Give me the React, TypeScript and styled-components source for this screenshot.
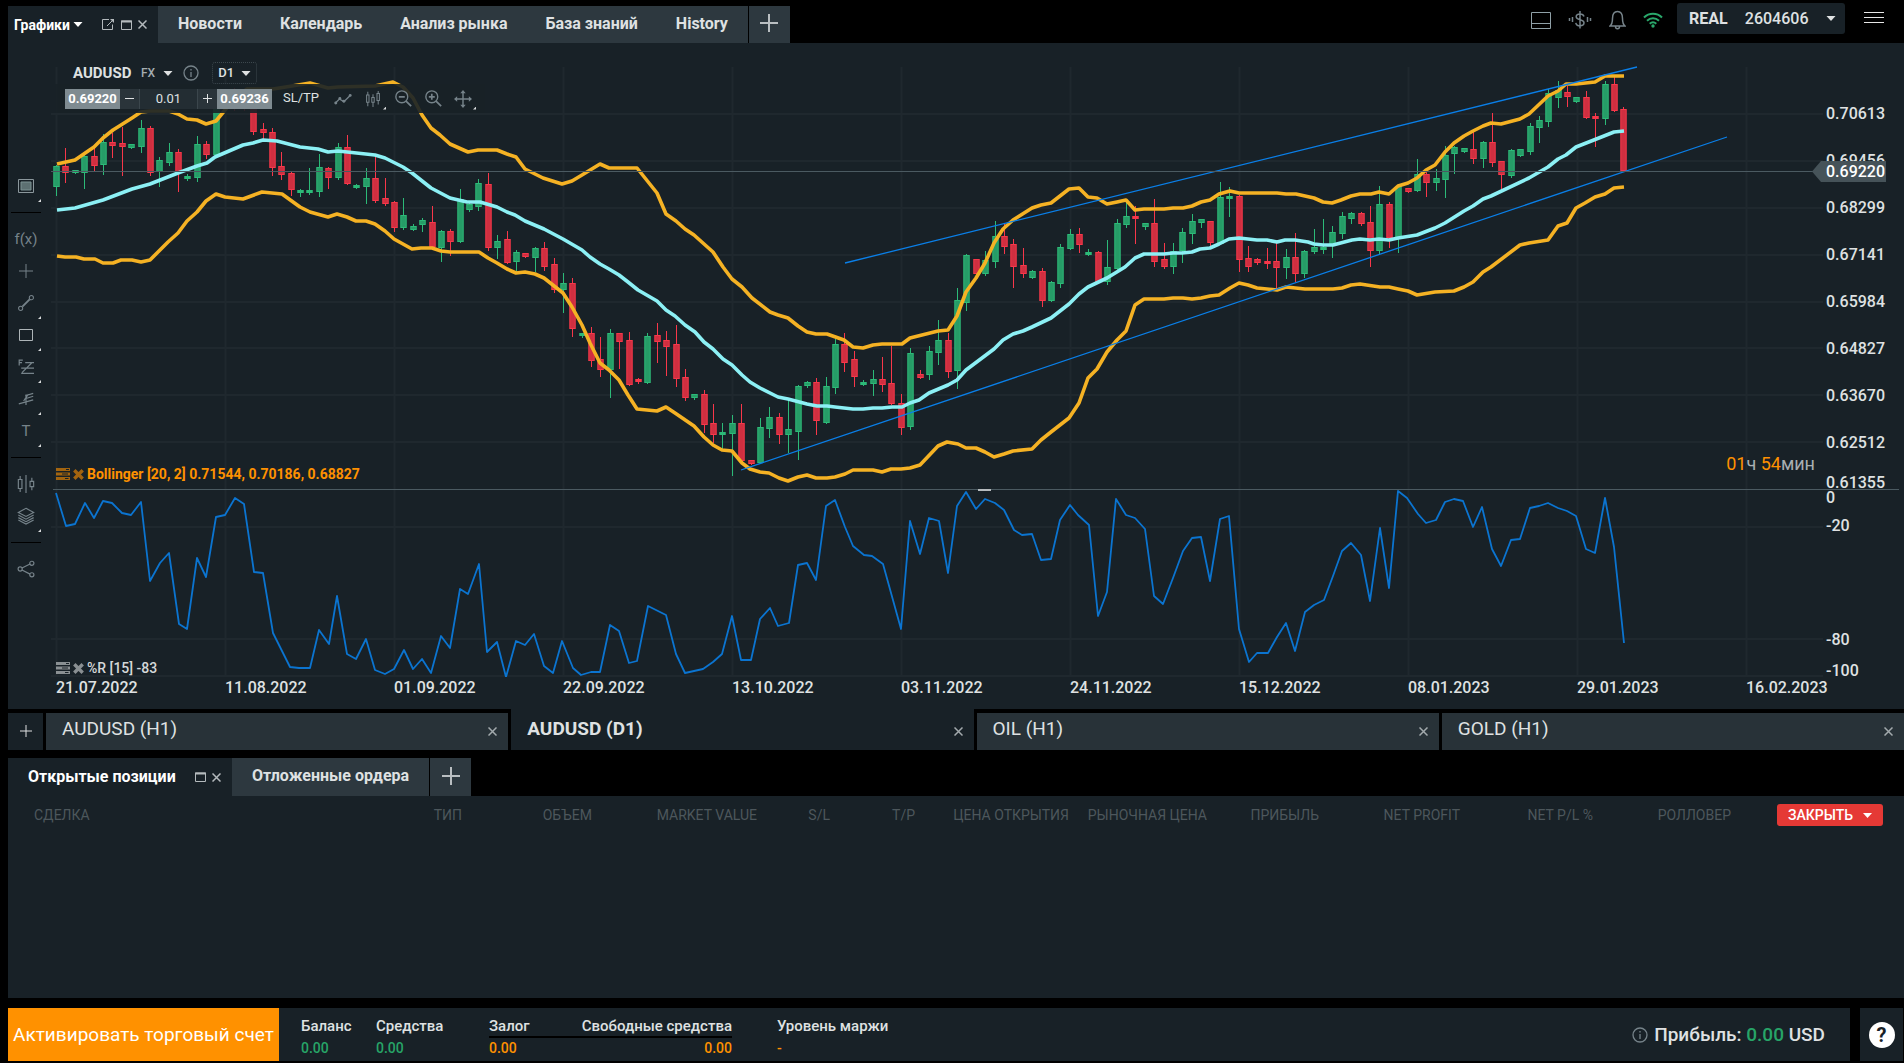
import React from "react";
import styled, { createGlobalStyle } from "styled-components";

const c = {
  panel: "#182127",
  tab: "#2d383f",
  chartTab: "#283238",
  grid: "#1f282e",
  text: "#dfe1e2",
  muted: "#76838a",
  dim: "#4d575c",
  amber: "#ff9100",
  green: "#27a567",
  line: "#4b5a61",
};

const GlobalStyle = createGlobalStyle`
  *, *::before, *::after { box-sizing: border-box; }
  body { margin: 0; background: #000; color: ${c.text}; font: 400 15px/20px Roboto, "Liberation Sans", sans-serif; }
  button, input, select { font: inherit; color: inherit; background: none; border: 0; padding: 0; margin: 0; }
  svg { display: block; flex-shrink: 0; }
`;

const Page = styled.div`
  display: flex;
  flex-direction: column;
  min-height: 100vh;
  padding: 0 0 2px 8px;
`;

/* ---------- top bar ---------- */
const TopBar = styled.header`
  display: flex;
  justify-content: space-between;
  height: 43px;
`;
const TabStrip = styled.nav<{ $pad?: number }>`
  display: flex;
  padding-top: ${(p) => p.$pad ?? 0}px;
`;
const ActiveTab = styled.div<{ $width: number; $indent: number }>`
  display: flex;
  align-items: center;
  width: ${(p) => p.$width}px;
  padding-left: ${(p) => p.$indent}px;
  background: ${c.panel};
  font-weight: 700;
  color: #fff;
`;
const TabTitle = styled.button<{ $size?: number }>`
  display: flex;
  align-items: center;
  gap: 3px;
  margin-right: 19px;
  font-size: ${(p) => p.$size ?? 16}px;
  font-weight: 700;
  white-space: nowrap;
`;
const WindowButton = styled.button`
  display: flex;
  align-items: center;
  height: 16px;
  margin-right: 6px;
  color: #b4babd;
`;
const TabGroup = styled.div`
  display: flex;
  background: ${c.tab};
  margin-right: 1px;
  padding: 0 1px;
`;
const Tab = styled.button`
  padding: 0 19px 2px;
  font-weight: 700;
  font-size: 16px;
  white-space: nowrap;
`;
const AddTab = styled.button`
  display: grid;
  place-items: center;
  width: 41px;
  padding-bottom: 3px;
  background: ${c.tab};
  color: #b9bec1;
`;
const Status = styled.div`
  display: flex;
  align-items: flex-start;
  padding: 3px 20px 0 0;
`;
const StatusIcons = styled.div`
  display: flex;
  align-items: center;
  height: 34px;
  gap: 17px;
  margin-right: 14px;
`;
const IconButton = styled.button<{ $color?: string }>`
  display: grid;
  place-items: center;
  color: ${(p) => p.$color ?? c.muted};
`;
const Account = styled.label`
  display: flex;
  align-items: center;
  justify-content: space-between;
  width: 168px;
  height: 31px;
  padding: 0 9px 0 12px;
  border-radius: 3px;
  background: ${c.panel};
  font-size: 16px;
  font-weight: 700;
`;
const Picker = styled.select`
  appearance: none;
  font-weight: 500;
  outline: none;
`;
const Menu = styled.button`
  display: grid;
  gap: 4px;
  width: 20px;
  margin: 9px 0 0 19px;
  span { height: 1px; background: #e6e6e6; }
`;

/* ---------- chart panel ---------- */
const ChartPanel = styled.section`
  display: flex;
  background: ${c.panel};
`;
const Rail = styled.aside`
  width: 43px;
  padding: 127px 10px 0 3px;
`;
const RailButton = styled.button`
  position: relative;
  display: grid;
  place-items: center;
  width: 30px;
  height: 32px;
  color: ${c.muted};
`;
const RailRule = styled.hr`
  height: 1px;
  margin: 10px 0;
  border: 0;
  background: #000;
`;
const Corner = styled.i<{ $rail?: boolean }>`
  position: absolute;
  right: ${(p) => (p.$rail ? 0 : -4)}px;
  bottom: ${(p) => (p.$rail ? 0 : -1)}px;
  width: 3px;
  height: 3px;
  background: #d7dadb;
  clip-path: polygon(100% 0, 100% 100%, 0 100%);
`;
const Stage = styled.div`
  flex: 1;
  min-width: 0;
`;
const Plot = styled.div`
  position: relative;
  display: flex;
  height: 634px;
`;
const Canvas = styled.svg`
  flex: 1;
  min-width: 0;
  height: 634px;
`;
const Axis = styled.div`
  width: 73px;
  margin-right: 5px;
  font-size: 16px;
  font-weight: 500;
`;
const PriceScale = styled.div`
  display: flex;
  flex-direction: column;
  height: 447px;
  padding-top: 47px;
  border-bottom: 1px solid ${c.line};
`;
const PriceMark = styled.span`
  height: 47px;
  line-height: 47px;
  &:last-child { height: auto; margin-top: auto; line-height: 12px; }
`;
const RangeScale = styled.div`
  display: flex;
  flex-direction: column;
  line-height: 16px;
`;
const RangeMark = styled.span<{ $gap: number }>`
  margin-top: ${(p) => p.$gap}px;
`;
const PriceFlag = styled.output`
  position: absolute;
  right: 18px;
  top: 118px;
  width: 74px;
  height: 21px;
  padding-left: 14px;
  background: #465359;
  clip-path: polygon(0 50%, 9px 0, 100% 0, 100% 100%, 9px 100%);
  color: #fff;
  font-size: 16px;
  font-weight: 500;
  line-height: 21px;
`;
const DateAxis = styled.div`
  display: grid;
  grid-template-columns: repeat(10, 1fr) 158px;
  height: 32px;
  padding-left: 5px;
  font-size: 16px;
  font-weight: 500;
  line-height: 22px;
`;
const Symbol = styled.div`
  position: absolute;
  left: 22px;
  top: 19px;
  display: flex;
  align-items: center;
  height: 22px;
`;
const SymbolName = styled.strong`
  width: 68px;
  font-size: 15px;
`;
const Market = styled.button`
  display: flex;
  align-items: center;
  gap: 8px;
  margin-right: 10px;
  color: #a5adb1;
  font-size: 12px;
  font-weight: 500;
  svg { color: ${c.text}; }
`;
const Frame = styled.label`
  display: flex;
  align-items: center;
  justify-content: space-between;
  width: 45px;
  height: 22px;
  margin-left: 13px;
  padding: 0 5px;
  border: 1px dotted #3d484e;
  border-radius: 3px;
  font-size: 13px;
`;
const Trade = styled.div`
  position: absolute;
  left: 4px;
  top: 41px;
  display: flex;
  align-items: center;
  width: 430px;
  height: 29px;
  padding-left: 10px;
  background: rgba(24, 33, 39, 0.9);
`;
const Quote = styled.button`
  width: 55px;
  height: 20px;
  background: #7f8b91;
  color: #fff;
  font-size: 13px;
  font-weight: 700;
`;
const Step = styled.button`
  display: grid;
  place-items: center;
  width: 19px;
  height: 20px;
  background: #2a343a;
`;
const Volume = styled.input`
  width: 59px;
  height: 20px;
  background: #232d33;
  border: solid #3b464c;
  border-width: 0 1px;
  text-align: center;
  font-size: 13px;
`;
const StopButton = styled.button`
  width: 36px;
  margin: 0 15px 0 11px;
  padding-bottom: 2px;
  font-size: 13px;
  text-align: left;
  white-space: nowrap;
`;
const Tool = styled.button`
  position: relative;
  display: grid;
  place-items: center;
  width: 18px;
  height: 20px;
  margin-right: 12px;
  color: ${c.muted};
`;
const Legend = styled.div<{ $y: number; $color: string; $weight: number }>`
  position: absolute;
  left: 5px;
  top: ${(p) => p.$y}px;
  display: flex;
  align-items: center;
  gap: 3px;
  height: 16px;
  color: ${(p) => p.$color};
  font-size: 14px;
  font-weight: ${(p) => p.$weight};
  svg { opacity: 0.6; }
`;
const Countdown = styled.div`
  position: absolute;
  right: 89px;
  top: 410px;
  color: #a9afb2;
  font-size: 18px;
  line-height: 22px;
  b { color: ${c.amber}; font-weight: 400; }
`;
const Splitter = styled.span`
  position: absolute;
  left: 50%;
  top: 446px;
  width: 13px;
  height: 2px;
  background: #b7bcbf;
`;

/* ---------- chart tabs ---------- */
const ChartTabs = styled.nav`
  display: grid;
  grid-template-columns: 35px repeat(4, 1fr);
  gap: 3px;
  height: 39px;
  margin-bottom: 10px;
`;
const AddChart = styled.button`
  display: grid;
  place-items: center;
  margin-top: 4px;
  padding-bottom: 1px;
  background: ${c.panel};
`;
const ChartTab = styled.div<{ $active?: boolean }>`
  display: flex;
  justify-content: space-between;
  margin-top: ${(p) => (p.$active ? 0 : 4)}px;
  padding: ${(p) => (p.$active ? 4 : 0)}px 11px 0 16px;
  background: ${(p) => (p.$active ? c.panel : c.chartTab)};
  font-size: 19px;
  font-weight: ${(p) => (p.$active ? 700 : 400)};
`;
const ChartName = styled.button`
  height: 31px;
  font-weight: inherit;
`;
const CloseChart = styled.button`
  display: grid;
  place-items: center;
  height: 37px;
  color: #a3aaad;
`;

/* ---------- positions ---------- */
const Positions = styled.section`
  display: flex;
  flex-direction: column;
  flex: 1;
  margin-bottom: 10px;
`;
const PositionTabs = styled(TabStrip)`
  height: 38px;
`;
const TableArea = styled.div`
  flex: 1;
  padding: 6px 21px 0 0;
  background: ${c.panel};
`;
const Table = styled.table`
  width: 100%;
  border-collapse: collapse;
  table-layout: fixed;
`;
const Head = styled.th`
  height: 26px;
  padding: 0;
  color: ${c.dim};
  font-size: 14px;
  font-weight: 400;
  text-align: right;
  white-space: nowrap;
  &:first-child { padding-left: 26px; text-align: left; }
`;
const CloseAll = styled.button`
  display: inline-flex;
  align-items: center;
  justify-content: space-between;
  width: 106px;
  height: 22px;
  padding: 0 11px;
  border-radius: 3px;
  background: #e53935;
  color: #fff;
  font-size: 14px;
  font-weight: 500;
`;

/* ---------- footer ---------- */
const Footer = styled.footer`
  display: flex;
  height: 53px;
  padding-right: 1px;
`;
const Activate = styled.button`
  width: 271px;
  background: #ff9100;
  color: #fff;
  font-size: 19px;
  white-space: nowrap;
`;
const Totals = styled.div`
  display: flex;
  flex: 1;
  padding: 8px 25px 0 22px;
  margin-right: 10px;
  background: ${c.panel};
`;
const Total = styled.dl<{ $width: number; $color: string; $right?: boolean; $rule?: boolean }>`
  width: ${(p) => p.$width}px;
  margin: 0;
  font-weight: 500;
  text-align: ${(p) => (p.$right ? "right" : "left")};
  white-space: nowrap;
  dt { height: 22px; font-size: 15px; border-bottom: 2px solid ${(p) => (p.$rule ? "#000" : "transparent")}; }
  dd { margin: 0; font-size: 14px; color: ${(p) => p.$color}; }
`;
const TotalGap = styled.span`
  width: 45px;
`;
const Profit = styled.div`
  display: flex;
  align-items: center;
  gap: 6px;
  height: 38px;
  margin-left: auto;
  font-size: 19px;
  font-weight: 500;
  b { color: ${c.green}; font-weight: 500; }
`;
const Help = styled.button`
  display: grid;
  place-items: center;
  width: 43px;
  background: ${c.panel};
  span {
    width: 26px;
    height: 26px;
    border-radius: 13px;
    background: #fff;
    color: #182127;
    font-size: 20px;
    font-weight: 700;
    line-height: 26px;
  }
`;

/* ---------- icons ---------- */
const Caret = ({ w = 9 }: { w?: number }) => (
  <svg width={w} height="5" viewBox="0 0 9 5"><path d="M0 0h9L4.500 5z" fill="currentColor" /></svg>
);
const Plus = ({ size, w = 2 }: { size: number; w?: number }) => (
  <svg width={size} height={size} viewBox={`0 0 ${size} ${size}`} stroke="currentColor" strokeWidth={w}>
    <path d={`M${size / 2} 0V${size}M0 ${size / 2}H${size}`} />
  </svg>
);
const Cross = () => (
  <svg width="9" height="9" viewBox="0 0 9 9" stroke="currentColor" strokeWidth="1.500"><path d="M.5.5l8 8M8.500.5l-8 8" /></svg>
);
const Maximize = () => (
  <svg width="11" height="10" viewBox="0 0 11 10" fill="none" stroke="currentColor"><path d="M.5 1h10v8.500H.5z" /><path d="M0 1.500h11" strokeWidth="2" /></svg>
);
const PopOut = () => (
  <svg width="13" height="11" viewBox="0 0 13 11" fill="none" stroke="currentColor">
    <path d="M7 .5H.5v10h10V5.500M5 7l6-6" /><path d="M8 0h4v4z" fill="currentColor" stroke="none" />
  </svg>
);
const Info = ({ size = 16 }: { size?: number }) => (
  <svg width={size} height={size} viewBox="0 0 16 16" fill="none" stroke={c.muted} strokeWidth="1.300">
    <circle cx="8" cy="8" r="7" /><path d="M8 7v5M8 4v1.600" />
  </svg>
);
const Glyph = ({ children, size = 20 }: { children: React.ReactNode; size?: number }) => (
  <svg width={size} height={size} viewBox="0 0 20 20" fill="none" stroke="currentColor" strokeWidth="1.300">{children}</svg>
);
const LayoutIcon = () => (
  <svg width="20" height="17" viewBox="0 0 20 17" fill="none" stroke="currentColor"><path d="M.5.5h19v16H.5zM0 11.500h20" /></svg>
);
const SignalIcon = () => (
  <svg width="24" height="18" viewBox="0 0 24 18" fill="none" stroke="currentColor" strokeWidth="1.500">
    <path d="M16 5.500C15.500 3.700 14 3 12 3 9.700 3 8.200 4.100 8.200 5.800c0 4 7.800 2 7.800 6 0 1.900-1.700 3-4 3-2.400 0-3.900-1.100-4.200-3M12 0v17.500M4.500 6v5M1.500 7v3M19.500 6v5M22.500 7v3" />
  </svg>
);
const BellIcon = () => (
  <svg width="17" height="20" viewBox="0 0 17 20" fill="none" stroke="currentColor" strokeWidth="1.500">
    <path d="M1 16c2-1.500 2.500-3 2.500-7.500C3.500 4 5.500 1.500 8.500 1.500s5 2.500 5 7c0 4.500.5 6 2.500 7.500zM6.500 16.500c0 3 4 3 4 0" />
  </svg>
);
const WifiIcon = () => (
  <svg width="20" height="16" viewBox="0 0 20 16" fill="none" stroke="currentColor" strokeWidth="2">
    <path d="M1 5.500c5-5 13-5 18 0M4 8.700c3.500-3.300 8.500-3.300 12 0M6.700 11.700c2-1.800 4.600-1.800 6.600 0" />
    <circle cx="10" cy="14" r="1.700" fill="currentColor" stroke="none" />
  </svg>
);
const LegendIcons = () => (
  <>
    <svg width="14" height="12" viewBox="0 0 14 12" fill="currentColor">
      <path d="M0 0h14v3H0zM0 4.500h14v3H0zM0 9h14v3H0z" />
      <path d="M10 1h3v1h-3zM6 5.500h6v1H6zM9 10h3.500v1H9z" fill="#182127" />
    </svg>
    <svg width="11" height="11" viewBox="0 0 11 11" stroke="currentColor" strokeWidth="3.400"><path d="M1.300 1.300l8.400 8.400M9.700 1.300L1.300 9.700" /></svg>
  </>
);

const railIcons: Record<string, React.ReactNode> = {
  Monitor: <svg width="16" height="14" viewBox="0 0 16 14"><path d="M.5.5h15v13H.5z" fill="none" stroke="#8b979c" /><path d="M3 3h10v8H3z" fill="#5d7072" stroke="#7d9293" /></svg>,
  Crosshair: <Plus size={14} w={1} />,
  Segment: <Glyph size={16}><path d="M5.500 14.500l9-9" strokeWidth="2.400" /><circle cx="3.300" cy="16.700" r="2.600" /><circle cx="16.700" cy="3.300" r="2.600" /></Glyph>,
  Rectangle: <svg width="14" height="12" viewBox="0 0 14 12"><path d="M.5.5h13v11H.5z" fill="none" stroke="#aeb5b8" /></svg>,
  Fibonacci: <Glyph size={16}><path d="M1.500 8V1.500H6M1.500 4.500H5M9 4.500h11M4 11.500h16M4 18h16M17 5L5 17" strokeWidth="1.500" /></Glyph>,
  Pitchfork: <Glyph size={16}><path d="M1 16l18-5M8 10l11-3.500M9 6l10-3M10 17.500V4.500M7 12.500L13 4" strokeWidth="1.500" /></Glyph>,
  Candles: <Glyph size={18}><path d="M3.500 1v4M3.500 15v4M1.500 5h4v10h-4zM10 0v20M16.500 3v4M16.500 13v4M14.500 7h4v6h-4z" /></Glyph>,
  Layers: <Glyph size={18}><path d="M10 1.500l8.500 4.500-8.500 4.500L1.500 6zM1.500 9l8.500 4.500L18.500 9M1.500 11.800l8.500 4.500 8.500-4.500M1.500 14.500L10 19l8.500-4.500" /></Glyph>,
  Share: <Glyph size={18}><path d="M5.500 9l9-4.500M5.500 11l9 4.700" /><circle cx="3.500" cy="10" r="2.300" /><circle cx="16.500" cy="3.700" r="2.300" /><circle cx="16.500" cy="16.500" r="2.300" /></Glyph>,
};
const RailText = styled.span`
  font-size: 15px;
`;
const RailTool = ({ name, corner }: { name: string; corner?: boolean }) => (
  <RailButton aria-label={name}>
    {name === "Functions" ? <RailText>f(x)</RailText> : name === "Text" ? <RailText>T</RailText> : railIcons[name]}
    {corner && <Corner $rail />}
  </RailButton>
);

/* ---------- chart data ---------- */
/* One candle per entry: direction, then high, body top, body bottom and low. */
const candles = `
G165,166,187,195 R148,166,173,182 G170,170,173,173 G154,156,173,188 R147,156,166,170 G134,142,165,174 R133,142,146,157 R127,143,147,175 G144,144,148,148 G120,128,147,152
R126,128,173,175 G157,160,172,186 G143,152,163,165 R149,152,172,191 G174,176,179,180 G136,144,178,181 R141,144,155,158 G100,105,155,157 G90,95,105,108 R88,89,104,110
R90,94,108,110 R100,105,132,134 R123,129,133,139 R128,132,168,175 R152,166,175,179 R172,173,190,195 G189,190,193,196 G168,190,193,194 G154,167,192,196 R167,168,178,188
G143,147,178,179 R135,147,184,184 G184,185,188,188 G168,178,187,203 R157,178,201,202 R178,198,204,205 R201,202,228,231 G198,215,228,229 G224,226,230,230 G218,220,225,231
R206,222,247,248 G230,231,248,261 R229,231,242,255 G189,199,242,242 G202,204,210,211 G179,183,207,210 R173,184,248,250 G235,241,248,258 R231,239,263,263 G250,252,262,270
R253,253,257,257 G247,248,258,271 R242,248,267,270 R258,264,290,292 G273,283,290,312 R278,283,329,336 G333,333,336,337 R327,333,361,366 R337,359,370,376 G329,333,370,397
R333,333,342,368 R332,340,385,385 R378,379,382,383 G333,336,383,383 R323,335,342,362 R331,340,347,375 R325,344,379,386 R369,377,398,400 G394,394,398,399 R390,394,425,432
R404,423,435,442 G423,432,435,448 G415,423,434,475 R404,423,461,463 R460,460,464,464 G418,427,463,463 G407,417,429,437 R413,417,435,443 G400,429,435,452 G385,386,432,459
G381,382,386,387 R378,382,421,434 G377,386,423,423 G339,344,388,393 R333,344,363,371 R351,359,377,386 G380,382,385,385 G370,379,384,395 R357,379,385,391 R346,383,404,404
R394,403,428,434 G348,353,427,429 R370,374,378,378 G346,351,375,379 G320,340,353,364 R333,340,372,377 G288,300,371,388 G254,255,303,310 R259,259,274,275 G251,260,274,275
G221,236,262,267 R224,236,247,253 R239,244,267,287 R248,265,274,277 G270,271,278,278 R268,271,301,306 G281,282,301,301 G244,247,284,287 G229,234,249,249 R228,234,245,252
G249,252,255,255 R251,252,282,283 G240,267,282,284 G219,223,269,269 G203,216,225,227 R206,216,219,243 G223,223,227,229 R199,223,262,266 R243,259,267,268 G243,251,267,273
G228,232,251,262 G214,221,234,243 G219,219,223,227 R221,221,243,246 G182,197,244,244 G187,196,199,216 R195,196,260,271 R246,258,267,271 R258,259,263,264 R248,261,264,268
R243,261,268,288 G249,257,268,278 R233,257,274,281 G250,251,274,277 G229,247,252,253 G219,247,249,253 G226,232,246,257 G212,216,234,238 G212,213,219,223 R212,213,224,225
R206,222,251,266 G186,204,251,254 R202,204,238,247 G185,186,238,252 R188,188,192,192 G159,174,191,191 R172,174,183,196 G169,178,183,190 G146,155,180,197 G146,147,154,173
G148,148,152,152 R132,149,159,163 G141,142,159,167 R113,142,163,166 R161,161,175,189 G149,150,176,177 G149,149,156,156 G123,126,152,154 G116,120,128,142 G89,93,122,126
G81,90,98,107 R86,92,97,106 G97,97,102,102 R91,97,118,118 R113,116,119,146 G81,84,119,124 R77,84,111,111 R107,109,171,171`
  .trim()
  .split(/\s+/)
  .map((s) => ({ up: s[0] === "G", v: s.slice(1).split(",").map(Number) }));

const upperBand =
  "57,164 75,160 94,147 103,138 113,130 121,125 132,118 141,112 150,111 169,111 178,114 187,119 197,120 206,124 216,121 225,110 235,98 247,89 273,89 292,86 310,83 328,88 338,87 375,86 393,82 403,87 413,98 422,115 431,128 440,135 450,144 468,152 478,150 497,150 507,154 516,157 525,169 543,178 562,184 572,181 582,175 600,164 609,168 637,168 657,193 666,214 676,221 685,229 694,235 713,252 723,267 732,279 742,287 752,298 770,312 778,315 788,318 798,326 807,332 816,334 827,334 844,340 853,347 863,348 873,345 882,344 902,344 910,338 938,331 948,330 957,316 966,292 976,278 985,263 994,243 1003,229 1013,220 1032,208 1041,205 1051,203 1069,189 1079,188 1088,197 1097,198 1107,204 1117,202 1126,200 1135,210 1144,209 1164,209 1173,208 1183,208 1192,206 1201,202 1210,200 1219,194 1230,191 1239,193 1277,193 1286,194 1296,194 1305,196 1314,198 1323,202 1332,203 1341,200 1351,196 1360,194 1371,194 1379,192 1389,194 1398,186 1408,183 1417,178 1426,170 1435,165 1445,152 1454,143 1464,136 1473,131 1483,126 1491,123 1501,124 1520,119 1529,114 1548,96 1558,91 1566,84 1576,84 1595,82 1605,76 1624,76";
const middleBand =
  "57,210 75,208 103,200 132,189 150,184 178,173 197,166 207,163 215,157 243,145 253,143 263,140 277,141 300,147 318,149 328,152 338,151 375,155 385,158 403,167 412,173 431,188 450,198 467,202 480,202 497,207 507,212 515,215 525,221 544,229 563,239 582,250 590,257 600,264 609,269 619,275 628,282 638,290 657,301 666,310 675,316 685,325 695,332 704,342 713,349 723,359 732,365 742,375 750,382 760,388 778,397 788,399 807,404 817,406 827,406 835,407 853,409 863,409 873,408 882,408 892,407 902,407 910,403 919,400 929,393 948,385 957,380 966,370 994,349 1003,340 1013,334 1023,331 1032,327 1051,318 1060,311 1069,304 1079,294 1088,287 1107,278 1125,267 1135,258 1144,254 1164,254 1173,253 1182,253 1192,252 1200,249 1210,248 1219,244 1229,239 1239,238 1257,240 1267,240 1277,242 1285,240 1295,240 1308,242 1314,244 1323,245 1333,245 1352,240 1360,239 1370,240 1379,239 1389,240 1398,238 1417,235 1435,228 1445,223 1464,211 1473,206 1483,199 1491,196 1529,178 1548,167 1558,159 1566,155 1576,147 1604,136 1614,132 1624,131";
const lowerBand =
  "57,256 65,257 76,257 84,259 95,259 103,263 113,263 121,260 132,260 141,262 150,260 159,251 168,242 178,233 187,221 197,212 206,201 216,194 225,197 243,199 262,192 282,194 300,207 310,212 328,217 337,214 347,217 356,221 366,221 375,224 385,231 394,239 412,249 421,248 432,248 441,251 450,252 479,252 488,258 497,263 507,269 516,273 525,272 535,274 544,278 563,293 572,307 582,325 590,343 600,363 609,370 619,380 628,395 637,409 657,411 666,407 675,413 694,426 704,437 713,445 722,450 732,451 742,463 750,469 760,472 769,473 779,478 788,481 798,477 807,475 816,478 827,478 835,477 845,474 853,470 873,470 882,472 891,469 901,469 910,468 920,465 938,446 947,442 958,444 966,448 976,448 985,452 994,457 1004,454 1013,451 1032,449 1041,440 1051,432 1060,425 1069,418 1079,403 1088,378 1097,369 1107,352 1117,340 1126,331 1135,305 1144,299 1164,299 1173,298 1183,298 1192,299 1201,298 1210,296 1219,295 1230,288 1239,283 1248,285 1257,288 1277,290 1286,287 1305,289 1333,289 1342,288 1351,285 1360,284 1380,287 1389,287 1398,289 1408,291 1417,295 1435,292 1454,291 1464,287 1473,282 1483,272 1491,267 1520,245 1529,243 1548,240 1558,226 1567,223 1576,208 1585,203 1595,197 1605,194 1614,188 1624,187";
const williams =
  "56,493 66,526 75,524 85,503 94,518 103,501 112,503 122,513 131,515 141,502 150,581 160,563 169,553 179,624 187,629 197,558 206,577 216,517 225,515 235,498 244,504 254,572 263,573 273,633 290,667 299,668 310,668 319,630 329,644 337,596 347,654 356,659 366,639 375,670 385,674 394,669 404,650 413,669 422,659 431,673 441,636 450,648 460,589 468,594 479,564 487,652 497,642 506,677 516,641 525,645 534,634 544,666 553,673 562,641 573,668 581,675 591,672 600,672 610,625 619,631 629,663 637,661 648,606 666,615 676,654 685,673 703,669 713,662 722,654 732,616 741,660 751,660 760,619 770,608 778,626 789,623 798,565 807,563 816,580 826,506 835,500 845,527 853,546 864,555 872,556 883,564 901,629 910,521 920,554 929,518 939,521 948,573 957,506 966,492 976,509 985,499 995,503 1004,510 1014,530 1022,535 1032,534 1041,560 1051,559 1060,520 1070,505 1078,515 1089,525 1098,616 1107,592 1116,499 1126,515 1135,518 1145,529 1154,596 1163,604 1173,578 1183,551 1192,538 1201,537 1210,581 1220,519 1229,516 1239,629 1249,662 1257,653 1268,653 1277,637 1286,623 1295,651 1305,612 1314,605 1324,600 1333,576 1342,551 1351,543 1361,555 1370,601 1380,528 1389,588 1398,491 1407,498 1418,514 1426,523 1436,520 1445,502 1454,499 1463,501 1473,527 1482,507 1492,549 1501,566 1511,540 1520,539 1530,508 1539,506 1548,503 1558,508 1567,511 1576,516 1586,549 1595,553 1605,498 1614,547 1624,643";

const gridRows = [114, 161, 208, 255, 302, 348, 395, 442, 527, 639, 676];
const prices = ["0.70613", "0.69456", "0.68299", "0.67141", "0.65984", "0.64827", "0.63670", "0.62512", "0.61355"];
const ranges: [string, number][] = [["0", 0], ["-20", 12], ["-80", 98], ["-100", 15]];
const dates = ["21.07.2022", "11.08.2022", "01.09.2022", "22.09.2022", "13.10.2022", "03.11.2022", "24.11.2022", "15.12.2022", "08.01.2023", "29.01.2023", "16.02.2023"];

const PriceChart = () => (
  <Canvas viewBox="51 43 1775 634" preserveAspectRatio="none" role="img" aria-label="AUDUSD D1">
    <g stroke={c.grid} strokeWidth="2">
      {dates.map((d, i) => <path key={d} d={`M${56.5 + 169 * i} 67V677`} />)}
      {gridRows.map((y) => <path key={y} d={`M51 ${y}H1823`} />)}
    </g>
    {candles.map(({ up, v }, i) => {
      const x = Math.floor(56.6 + 9.385 * i);
      const edge = up ? "#2cba78" : "#f8374a";
      const fill = up ? "#269c67" : "#cf2f40";
      const h = Math.max(v[2] - v[1], 3);
      return (
        <g key={i}>
          <rect x={x} y={v[0]} width="1" height={v[3] - v[0] + 1} fill={edge} />
          <rect x={x - 2.75} y={v[1]} width="6.500" height={h} fill={edge} />
          {h > 3 && <rect x={x - 1.75} y={v[1] + 1} width="4.500" height={h - 2} fill={fill} />}
        </g>
      );
    })}
    <g fill="none" strokeWidth="3.600" strokeLinejoin="round">
      <polyline points={upperBand} stroke="#f5b224" />
      <polyline points={lowerBand} stroke="#f5b224" />
      <polyline points={middleBand} stroke="#8cf0f5" />
    </g>
    <path d="M845 263L1637 67M741 470L1727 137" stroke="#0a7fe8" strokeWidth="1.300" />
    <path d="M51 171.500H1814" stroke={c.line} />
    <path d="M53 489.500H1826" stroke={c.line} />
    <polyline points={williams} fill="none" stroke="#0b74d0" strokeWidth="1.800" strokeLinejoin="round" />
  </Canvas>
);

const columns: [string, number | undefined][] = [
  ["СДЕЛКА", undefined], ["ТИП", 154], ["ОБЪЕМ", 130], ["MARKET VALUE", 165], ["S/L", 73], ["T/P", 85],
  ["ЦЕНА ОТКРЫТИЯ", 154], ["РЫНОЧНАЯ ЦЕНА", 138], ["ПРИБЫЛЬ", 112], ["NET PROFIT", 141], ["NET P/L %", 133], ["РОЛЛОВЕР", 138],
];
const Col = styled.col<{ $w?: number }>`
  width: ${(p) => (p.$w ? `${p.$w}px` : "auto")};
`;

export default function App() {
  return (
    <>
      <GlobalStyle />
      <Page>
        <TopBar>
          <TabStrip $pad={6}>
            <ActiveTab $width={150} $indent={6}>
              <TabTitle $size={14}>Графики<Caret w={10} /></TabTitle>
              <WindowButton aria-label="Открыть в окне"><PopOut /></WindowButton>
              <WindowButton aria-label="Развернуть"><Maximize /></WindowButton>
              <WindowButton aria-label="Закрыть"><Cross /></WindowButton>
            </ActiveTab>
            <TabGroup>
              {["Новости", "Календарь", "Анализ рынка", "База знаний", "History"].map((t) => <Tab key={t}>{t}</Tab>)}
            </TabGroup>
            <AddTab aria-label="Добавить"><Plus size={18} /></AddTab>
          </TabStrip>
          <Status>
            <StatusIcons>
              <IconButton aria-label="Макет" $color="#8fa0a7"><LayoutIcon /></IconButton>
              <IconButton aria-label="Сигналы"><SignalIcon /></IconButton>
              <IconButton aria-label="Уведомления"><BellIcon /></IconButton>
              <IconButton aria-label="Соединение" $color="#2aa86b"><WifiIcon /></IconButton>
            </StatusIcons>
            <Account>
              REAL
              <Picker defaultValue="2604606"><option>2604606</option></Picker>
              <Caret w={10} />
            </Account>
            <Menu aria-label="Меню"><span /><span /><span /></Menu>
          </Status>
        </TopBar>

        <ChartPanel>
          <Rail>
            <RailTool name="Monitor" corner />
            <RailRule />
            <RailTool name="Functions" />
            <RailTool name="Crosshair" />
            <RailTool name="Segment" corner />
            <RailTool name="Rectangle" corner />
            <RailTool name="Fibonacci" corner />
            <RailTool name="Pitchfork" corner />
            <RailTool name="Text" corner />
            <RailRule />
            <RailTool name="Candles" />
            <RailTool name="Layers" corner />
            <RailRule />
            <RailTool name="Share" />
          </Rail>
          <Stage>
            <Plot>
              <PriceChart />
              <Axis>
                <PriceScale>{prices.map((p) => <PriceMark key={p}>{p}</PriceMark>)}</PriceScale>
                <RangeScale>{ranges.map(([r, gap]) => <RangeMark key={r} $gap={gap}>{r}</RangeMark>)}</RangeScale>
              </Axis>
              <PriceFlag>0.69220</PriceFlag>
              <Symbol>
                <SymbolName>AUDUSD</SymbolName>
                <Market>FX<Caret w={10} /></Market>
                <IconButton aria-label="Информация"><Info /></IconButton>
                <Frame>
                  <Picker aria-label="Период" defaultValue="D1"><option>D1</option></Picker>
                  <Caret w={10} />
                </Frame>
              </Symbol>
              <Trade>
                <Quote>0.69220</Quote>
                <Step aria-label="Меньше"><svg width="9" height="1"><rect width="9" height="1" fill={c.text} /></svg></Step>
                <Volume aria-label="Объем" defaultValue="0.01" />
                <Step aria-label="Больше"><Plus size={9} w={1} /></Step>
                <Quote>0.69236</Quote>
                <StopButton>SL/TP</StopButton>
                <Tool aria-label="Линия"><Glyph size={18}><path d="M1 15l5-5 5 3 7-7" strokeWidth="1.500" /><g fill="currentColor" stroke="none"><circle cx="2" cy="14.500" r="1.600" /><circle cx="6.500" cy="9.500" r="1.600" /><circle cx="11" cy="12.500" r="1.600" /><circle cx="18" cy="6" r="1.600" /></g></Glyph></Tool>
                <Tool aria-label="Свечи"><Glyph size={16}><path d="M3.500 1v4M3.500 14v5M2 5h3v9H2zM10 4v4M10 14v6M8.500 8h3v6h-3zM16.500 0v3M16.500 12v5M15 3h3v9h-3z" /></Glyph><Corner /></Tool>
                <Tool aria-label="Отдалить"><Glyph size={17}><circle cx="8" cy="8" r="7" strokeWidth="1.600" /><path d="M13 13l6 6M4.500 8h7" strokeWidth="2" /></Glyph></Tool>
                <Tool aria-label="Приблизить"><Glyph size={17}><circle cx="8" cy="8" r="7" strokeWidth="1.600" /><path d="M13 13l6 6M4.500 8h7M8 4.500v7" strokeWidth="2" /></Glyph></Tool>
                <Tool aria-label="Переместить"><Glyph size={18}><path d="M10 2v16M2 10h16" strokeWidth="1.600" /><path d="M10 0l3 3.500H7zM10 20l3-3.500H7zM0 10l3.500-3v6zM20 10l-3.500-3v6z" fill="currentColor" stroke="none" /></Glyph><Corner /></Tool>
              </Trade>
              <Legend $y={423} $color={c.amber} $weight={700}><LegendIcons />Bollinger [20, 2] 0.71544, 0.70186, 0.68827</Legend>
              <Legend $y={617} $color="#d5d8d9" $weight={500}><LegendIcons />%R [15] -83</Legend>
              <Countdown><b>01</b>ч <b>54</b>мин</Countdown>
              <Splitter />
            </Plot>
            <DateAxis>{dates.map((d) => <time key={d}>{d}</time>)}</DateAxis>
          </Stage>
        </ChartPanel>

        <ChartTabs>
          <AddChart aria-label="Новый график"><Plus size={12} w={1} /></AddChart>
          {["AUDUSD (H1)", "AUDUSD (D1)", "OIL (H1)", "GOLD (H1)"].map((t, i) => (
            <ChartTab key={t} $active={i === 1}>
              <ChartName>{t}</ChartName>
              <CloseChart aria-label={`Закрыть ${t}`}><Cross /></CloseChart>
            </ChartTab>
          ))}
        </ChartTabs>

        <Positions>
          <PositionTabs>
            <ActiveTab $width={224} $indent={20}>
              <TabTitle>Открытые позиции</TabTitle>
              <WindowButton aria-label="Развернуть"><Maximize /></WindowButton>
              <WindowButton aria-label="Закрыть"><Cross /></WindowButton>
            </ActiveTab>
            <TabGroup><Tab>Отложенные ордера</Tab></TabGroup>
            <AddTab aria-label="Добавить"><Plus size={18} /></AddTab>
          </PositionTabs>
          <TableArea>
            <Table>
              <colgroup>
                {columns.map(([t, w]) => <Col key={t} $w={w} />)}
                <Col $w={152} />
              </colgroup>
              <thead>
                <tr>
                  {columns.map(([t]) => <Head key={t}>{t}</Head>)}
                  <Head><CloseAll>ЗАКРЫТЬ<Caret /></CloseAll></Head>
                </tr>
              </thead>
              <tbody />
            </Table>
          </TableArea>
        </Positions>

        <Footer>
          <Activate>Активировать торговый счет</Activate>
          <Totals>
            <Total $width={75} $color={c.green}><dt>Баланс</dt><dd>0.00</dd></Total>
            <Total $width={113} $color={c.green}><dt>Средства</dt><dd>0.00</dd></Total>
            <Total $width={83} $color={c.amber} $rule><dt>Залог</dt><dd>0.00</dd></Total>
            <Total $width={160} $color={c.amber} $right $rule><dt>Свободные средства</dt><dd>0.00</dd></Total>
            <TotalGap />
            <Total $width={120} $color={c.amber}><dt>Уровень маржи</dt><dd>-</dd></Total>
            <Profit><Info /><span>Прибыль: <b>0.00</b> USD</span></Profit>
          </Totals>
          <Help aria-label="Помощь"><span>?</span></Help>
        </Footer>
      </Page>
    </>
  );
}
